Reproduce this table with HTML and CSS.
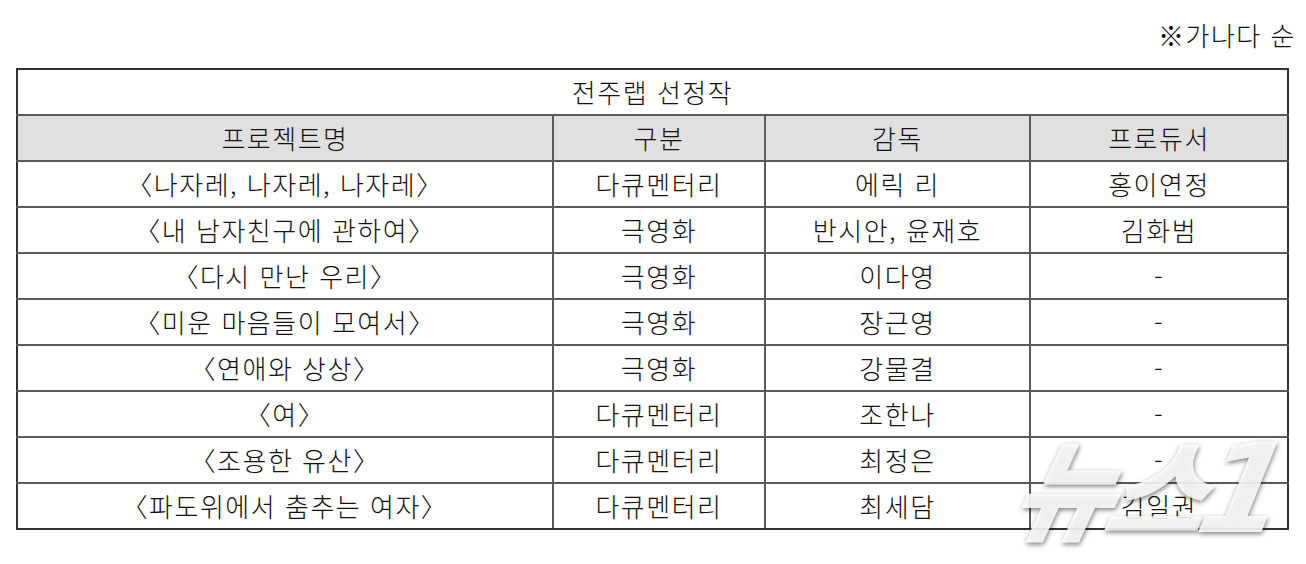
FILE: index.html
```html
<!DOCTYPE html>
<html lang="ko">
<head>
<meta charset="utf-8">
<link rel="stylesheet" href="styles.css">
</head>
<body>
<div class="page">
  <div class="note">※가나다 순</div>
  <table class="list">
    <colgroup>
      <col class="c1"><col class="c2"><col class="c3"><col class="c4">
    </colgroup>
    <tr><td class="title" colspan="4">전주랩 선정작</td></tr>
    <tr class="head"><td>프로젝트명</td><td>구분</td><td>감독</td><td>프로듀서</td></tr>
    <tr><td>〈나자레, 나자레, 나자레〉</td><td>다큐멘터리</td><td>에릭 리</td><td>홍이연정</td></tr>
    <tr><td>〈내 남자친구에 관하여〉</td><td>극영화</td><td>반시안, 윤재호</td><td>김화범</td></tr>
    <tr><td>〈다시 만난 우리〉</td><td>극영화</td><td>이다영</td><td>-</td></tr>
    <tr><td>〈미운 마음들이 모여서〉</td><td>극영화</td><td>장근영</td><td>-</td></tr>
    <tr><td>〈연애와 상상〉</td><td>극영화</td><td>강물결</td><td>-</td></tr>
    <tr><td>〈여〉</td><td>다큐멘터리</td><td>조한나</td><td>-</td></tr>
    <tr><td>〈조용한 유산〉</td><td>다큐멘터리</td><td>최정은</td><td>-</td></tr>
    <tr><td>〈파도위에서 춤추는 여자〉</td><td>다큐멘터리</td><td>최세담</td><td>김일권</td></tr>
  </table>
  <div class="mark">뉴스<span class="one">1</span></div>
</div>
</body>
</html>
```

FILE: styles.css
```css
html, body {
  margin: 0;
  padding: 0;
  background: #ffffff;
}
body {
  width: 1306px;
  height: 564px;
  overflow: hidden;
  font-family: "Noto Sans CJK KR", "Noto Sans", sans-serif;
  font-weight: 300;
  color: #111111;
}
.page {
  position: relative;
  padding: 18px 0 0 16px;
}
.note {
  text-align: right;
  padding-right: 10px;
  font-size: 26px;
  line-height: 34px;
  height: 50px;
  letter-spacing: 1.5px;
}
.list {
  border-collapse: collapse;
  table-layout: fixed;
  width: 1271px;
  border: 2px solid #333;
}
.c1 { width: 536px; }
.c2 { width: 212px; }
.c3 { width: 265px; }
.c4 { width: 258px; }
.list td {
  height: 44px;
  padding: 0;
  border: 2px solid #5a5a5a;
  text-align: center;
  vertical-align: middle;
  font-size: 26px;
  letter-spacing: 1.5px;
  line-height: 30px;
  white-space: nowrap;
}
.list tr:first-child td { border-top-color: #333; }
.list td:first-child { border-left-color: #333; }
.list td:last-child { border-right-color: #333; }
.list tr:last-child td { border-bottom-color: #333; }
.head td {
  background: #e0e0e0;
}
.mark {
  position: absolute;
  left: 1016px;
  top: 422px;
  font-size: 110px;
  line-height: 124px;
  font-weight: 900;
  font-style: italic;
  letter-spacing: -8px;
  color: rgba(255, 255, 255, 0.88);
  text-shadow: 1px 2px 5px rgba(0, 0, 0, 0.5);
  transform: skewX(-12deg);
  font-family: "Noto Sans CJK KR", sans-serif;
}
.mark .one {
  font-family: "DejaVu Sans", sans-serif;
  font-size: 124px;
  letter-spacing: 0;
}
```
